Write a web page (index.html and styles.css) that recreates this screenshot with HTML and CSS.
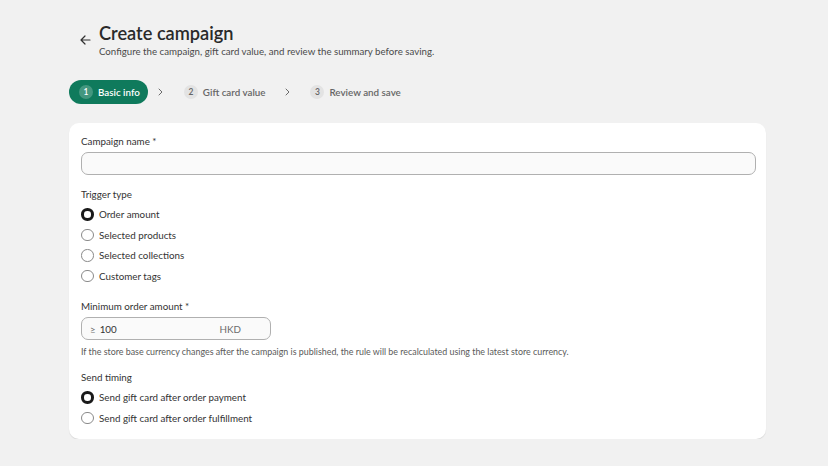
FILE: index.html
```html
<!DOCTYPE html>
<html lang="en">
<head>
    <meta charset="UTF-8">
    <meta name="viewport" content="width=device-width, initial-scale=1.0">
    <title>Create campaign</title>
    <link rel="stylesheet" href="styles.css">
</head>
<body>
    <div class="page">
        <div class="header">
            <span class="back">
                <svg width="11" height="10" viewBox="0 0 11 10"><path d="M10 5H1.5M5 1L1 5l4 4" fill="none" stroke="#303030" stroke-width="1.2" stroke-linecap="round" stroke-linejoin="round"/></svg>
            </span>
            <div>
                <h1>Create campaign</h1>
                <p class="subtitle">Configure the campaign, gift card value, and review the summary before saving.</p>
            </div>
        </div>

        <div class="steps">
            <div class="step step-active"><span class="step-num">1</span>Basic info</div>
            <span class="chevron"><svg width="5" height="8" viewBox="0 0 5 8"><path d="M1 1l3 3-3 3" fill="none" stroke="#6b6b6b" stroke-width="1" stroke-linecap="round" stroke-linejoin="round"/></svg></span>
            <div class="step"><span class="step-num">2</span>Gift card value</div>
            <span class="chevron"><svg width="5" height="8" viewBox="0 0 5 8"><path d="M1 1l3 3-3 3" fill="none" stroke="#6b6b6b" stroke-width="1" stroke-linecap="round" stroke-linejoin="round"/></svg></span>
            <div class="step"><span class="step-num">3</span>Review and save</div>
        </div>

        <div class="card">
            <div class="label">Campaign name *</div>
            <div class="input input-full"></div>

            <div class="label label-group label-radio">Trigger type</div>
            <div class="radio radio-on">Order amount</div>
            <div class="radio">Selected products</div>
            <div class="radio">Selected collections</div>
            <div class="radio">Customer tags</div>

            <div class="label label-group">Minimum order amount *</div>
            <div class="input input-amount">
                <span class="prefix">&ge;</span>
                <span class="value">100</span>
                <span class="suffix">HKD</span>
            </div>
            <p class="help">If the store base currency changes after the campaign is published, the rule will be recalculated using the latest store currency.</p>

            <div class="label label-group label-radio">Send timing</div>
            <div class="radio radio-on">Send gift card after order payment</div>
            <div class="radio">Send gift card after order fulfillment</div>
        </div>
    </div>
</body>
</html>
```

FILE: styles.css
```css
* {
    margin: 0;
    padding: 0;
    box-sizing: border-box;
}

body {
    font-family: 'Lato', 'Noto Sans', sans-serif;
    background-color: #f1f1f1;
    color: #333;
}

.page {
    width: 697px;
    margin-left: 69px;
    padding-top: 22px;
}

.header {
    display: flex;
    align-items: flex-start;
    padding-left: 11px;
}

.back {
    width: 19px;
    padding-top: 7px;
}

h1 {
    font-size: 18.2px;
    font-weight: 600;
    line-height: 23px;
    color: #2a2a2a;
}

.subtitle {
    font-size: 9.7px;
    line-height: 12px;
    color: #4a4a4a;
}

.steps {
    display: flex;
    align-items: center;
    margin-top: 23px;
    height: 24px;
}

.step {
    display: flex;
    align-items: center;
    height: 24px;
    padding: 0 9px 0 10px;
    border-radius: 12px;
    font-size: 9.8px;
    font-weight: 600;
    color: #666;
}

.step-num {
    display: inline-flex;
    align-items: center;
    justify-content: center;
    width: 14px;
    height: 14px;
    margin-right: 5px;
    border-radius: 50%;
    background-color: #e3e3e3;
    font-size: 8.5px;
    color: #666;
}

.step-active {
    background-color: #0f7a5c;
    color: #fff;
    padding-right: 8px;
}

.step-active .step-num {
    background-color: rgba(255, 255, 255, 0.22);
    color: #fff;
}

.chevron {
    display: flex;
    justify-content: center;
    width: 26px;
}

.card {
    margin-top: 19px;
    background-color: #fff;
    border-radius: 10px;
    box-shadow: 0 1px 1px rgba(0, 0, 0, 0.1);
    padding: 11px 11px 11px 12px;
}

.label {
    font-size: 9.8px;
    line-height: 15px;
    color: #333;
}

.label-group {
    margin-top: 13px;
}

.label-radio {
    margin-top: 12px;
    margin-bottom: 2px;
}

.input {
    border: 1px solid #b0b0b0;
    border-radius: 7px;
    background-color: #fafafa;
    height: 23px;
    margin-top: 3px;
}

.input-full {
    width: 675px;
}

.input-amount {
    width: 190px;
    display: flex;
    align-items: center;
    padding: 0 8px;
    font-size: 9.8px;
}

.prefix {
    color: #6b6b6b;
    margin-right: 4px;
}

.value {
    flex: 1;
    color: #333;
}

.suffix {
    color: #6b6b6b;
    margin-right: 21px;
}

.help {
    font-size: 8.9px;
    line-height: 13px;
    margin-top: 5px;
    color: #5a5a5a;
}

.radio {
    display: flex;
    align-items: center;
    height: 20.5px;
    font-size: 9.8px;
    color: #333;
}

.radio::before {
    content: "";
    width: 12.5px;
    height: 12.5px;
    border: 1px solid #8a8a8a;
    border-radius: 50%;
    margin-right: 5.5px;
    box-sizing: border-box;
}

.radio-on::before {
    border: 3.5px solid #1a1a1a;
}
```
